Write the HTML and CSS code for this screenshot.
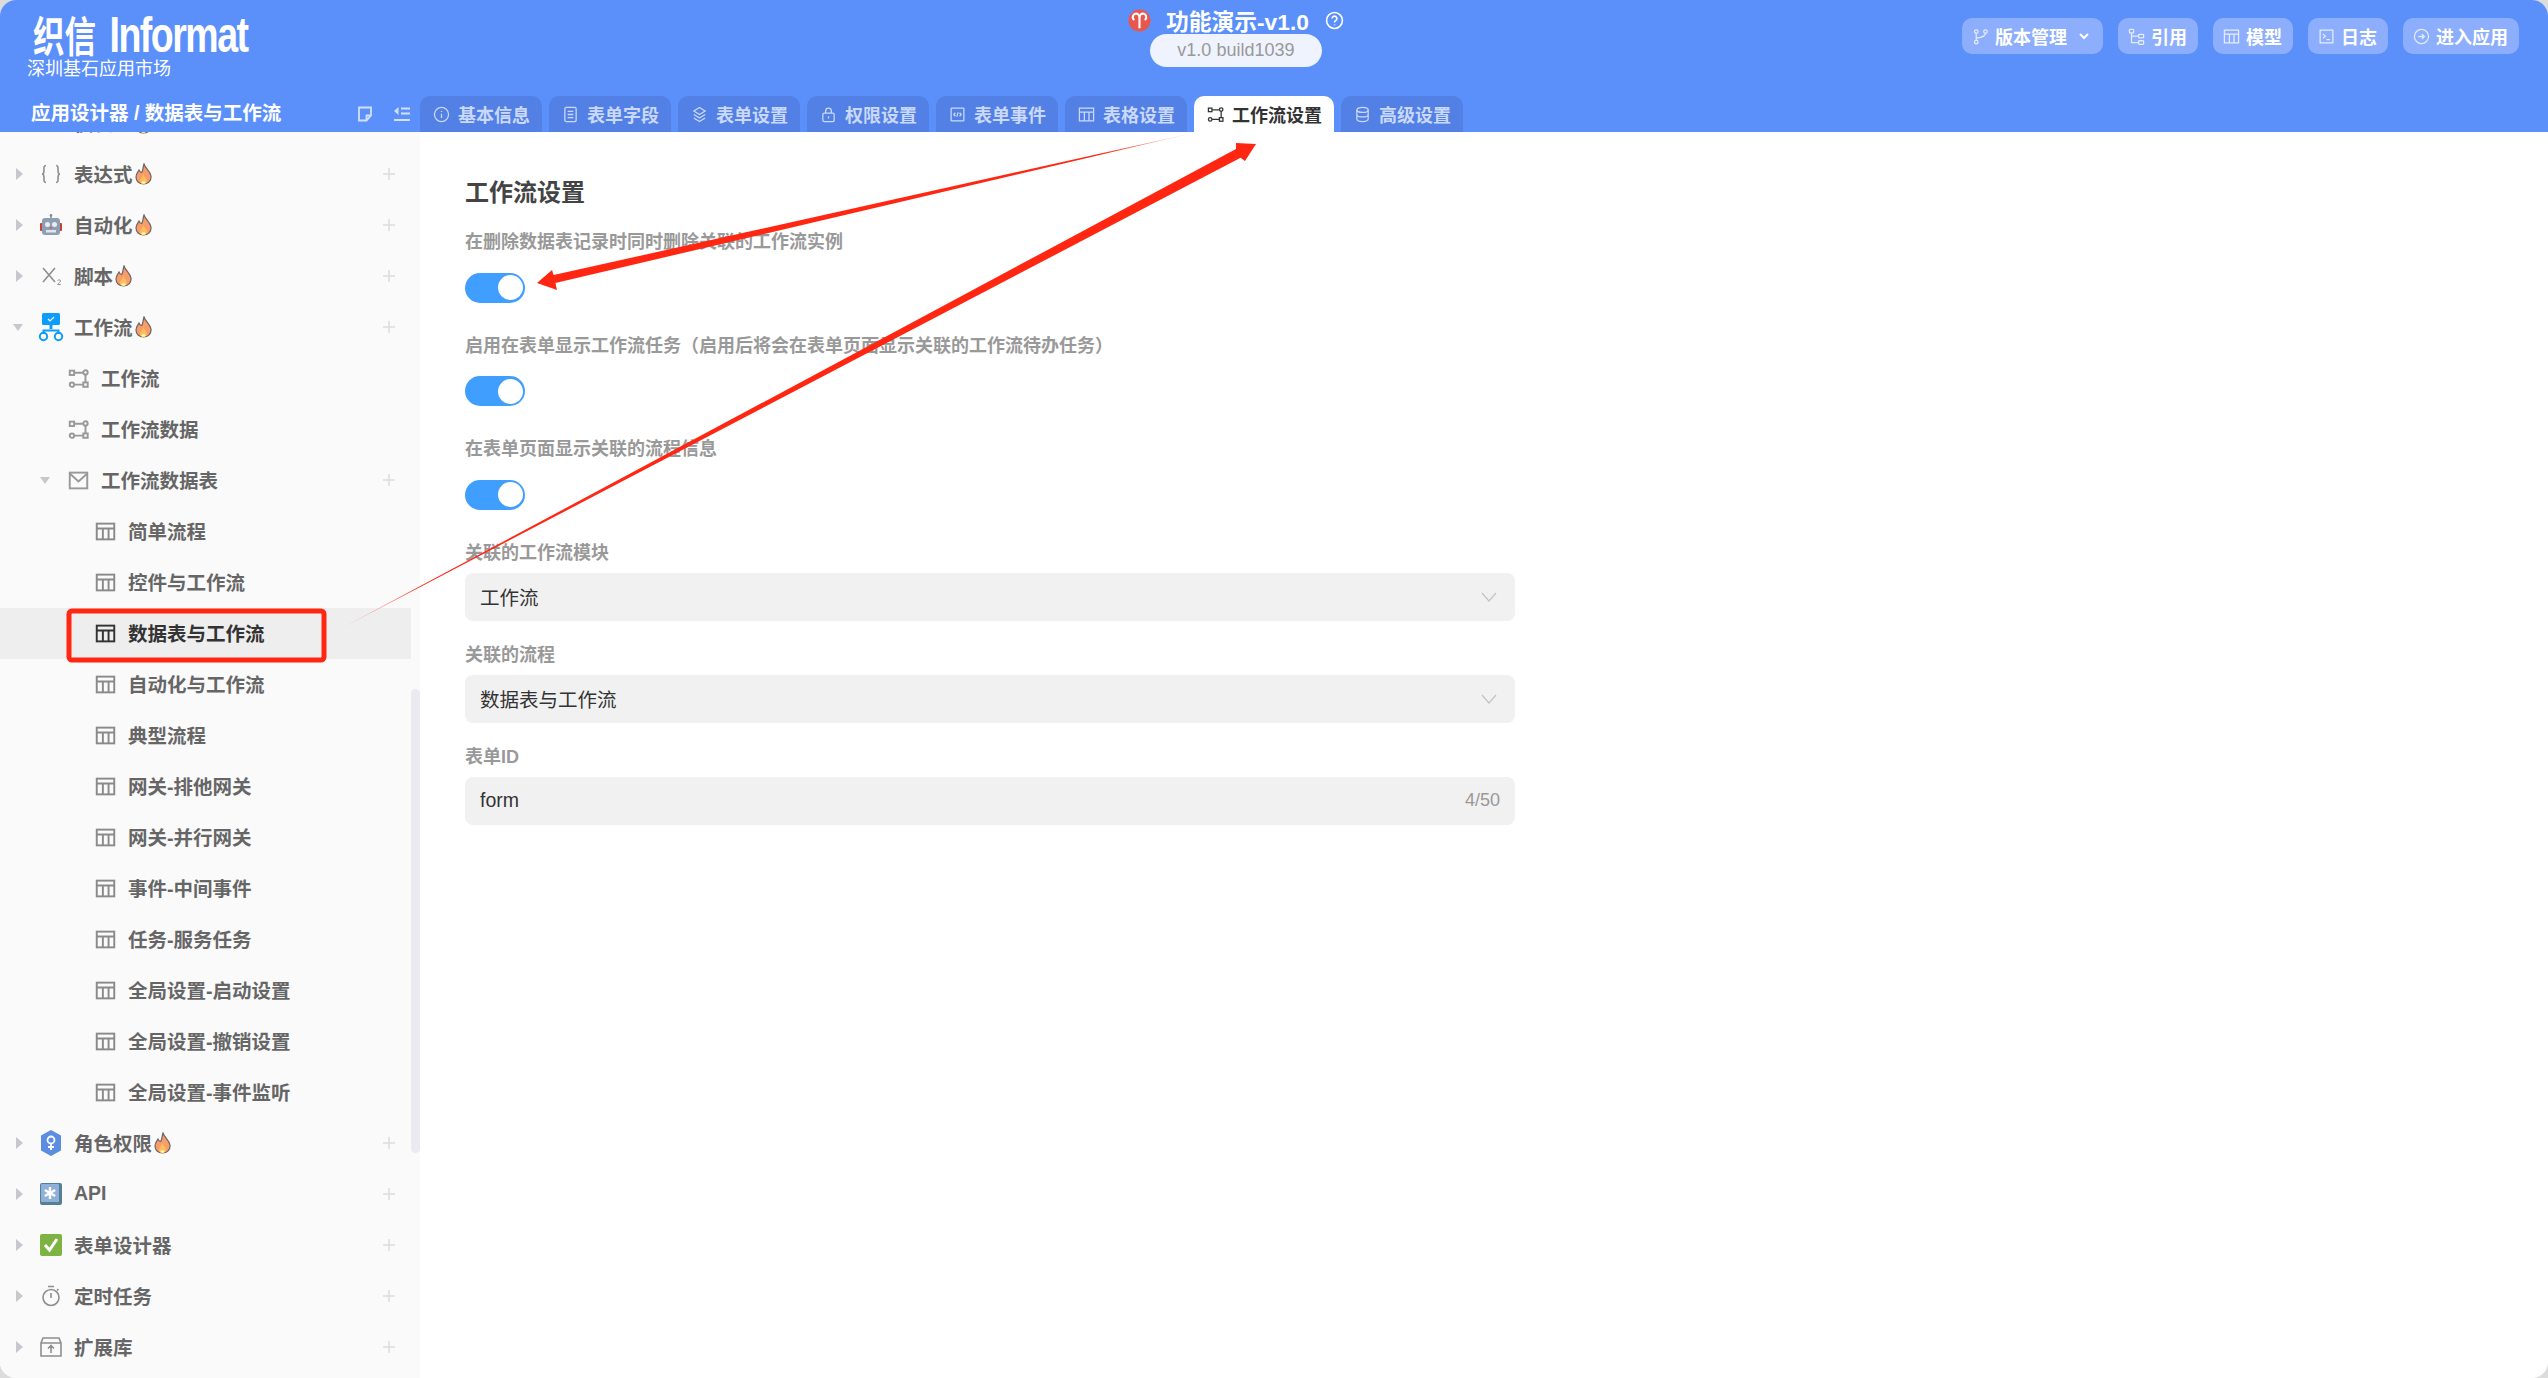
FILE: index.html
```html
<!DOCTYPE html>
<html lang="zh-CN">
<head>
  <meta charset="UTF-8">
  <meta name="viewport" content="width=device-width, initial-scale=1">
  <title>织信 Informat - 工作流设置</title>
  <link rel="stylesheet" href="styles.css">
</head>
<body>
  <!-- Icons -->
  <svg class="sprite" aria-hidden="true">
    <symbol id="i-info" viewBox="0 0 24 24"><circle cx="12" cy="12" r="10"/><path d="M12 11v6M12 7v1.5"/></symbol>
    <symbol id="i-doc" viewBox="0 0 24 24"><rect x="4" y="2" width="16" height="20" rx="2"/><path d="M8 7.5h8M8 12h8M8 16.5h8"/></symbol>
    <symbol id="i-layers" viewBox="0 0 24 24"><path d="M12 2l8 5-8 5-8-5zM4 12l8 5 8-5M4 17l8 5 8-5"/></symbol>
    <symbol id="i-lock" viewBox="0 0 24 24"><rect x="4" y="10" width="16" height="12" rx="2"/><path d="M8 10V7a4 4 0 0 1 8 0v3M12 14.5v3"/></symbol>
    <symbol id="i-code" viewBox="0 0 24 24"><rect x="3" y="3" width="18" height="18" rx="1"/><path d="M9 9.5L6.8 12 9 14.5M15 9.5l2.2 2.5-2.2 2.5M13 9l-2 6"/></symbol>
    <symbol id="i-table" viewBox="0 0 24 24"><rect x="2" y="3" width="20" height="18"/><path d="M2 8.5h20M9 8.5V21M15.500 8.500V21"/></symbol>
    <symbol id="i-flow" viewBox="0 0 24 24"><rect x="2" y="3" width="5" height="5"/><circle cx="20" cy="5" r="2.500"/><circle cx="4.500" cy="19" r="2.500"/><rect x="17.500" y="16.500" width="5" height="5"/><path d="M7 5.500h10.500M20 7.500v9M7 19h10.500"/></symbol>
    <symbol id="i-db" viewBox="0 0 24 24"><ellipse cx="12" cy="5.500" rx="8" ry="3.500"/><path d="M4 5.500v13c0 2 3.600 3.500 8 3.500s8-1.500 8-3.500v-13M4 12c0 2 3.600 3.500 8 3.500s8-1.500 8-3.500"/></symbol>
    <symbol id="i-mail" viewBox="0 0 24 24"><rect x="2" y="3" width="20" height="18"/><path d="M2 4l10 9 10-9"/></symbol>
    <symbol id="i-branch" viewBox="0 0 24 24"><circle cx="6" cy="5" r="2.500"/><circle cx="6" cy="20" r="2.500"/><circle cx="19" cy="5" r="2.500"/><path d="M6 7.500v10M19 7.500c0 5-6 5.500-13 7"/></symbol>
    <symbol id="i-tree" viewBox="0 0 24 24"><rect x="2" y="2" width="6" height="5" rx="1"/><rect x="15" y="9" width="7" height="5" rx="1"/><rect x="15" y="18" width="7" height="5" rx="1"/><path d="M5 7v13.500h10M5 11.500h10"/></symbol>
    <symbol id="i-term" viewBox="0 0 24 24"><rect x="3" y="3" width="18" height="18"/><path d="M7 8.500l3.500 3L7 14.500M12 16.500h5"/></symbol>
    <symbol id="i-enter" viewBox="0 0 24 24"><circle cx="12" cy="12" r="10"/><path d="M7.500 12h8.500M12.500 8.500L16 12l-3.500 3.500"/></symbol>
    <symbol id="i-plus" viewBox="0 0 12 12"><path d="M6 0v12M0 6h12"/></symbol>
    <symbol id="i-fire" viewBox="0 0 17 22">
      <path class="flame" d="M9 1c1 4 6 7 7 12 .5 5-3 8-7.500 8S1 18 1 14c0-3 2-5 3-7 1 2 2 3 3 2 1-2 1-5 2-8z"/>
      <path class="flame-in" d="M8.500 11c.5 3 3.500 4 3.500 7 0 2-2 3-3.500 3C6.500 21 5 20 5 18s2-3 3.500-7z"/>
      <ellipse class="flame-core" cx="8.500" cy="19.500" rx="2" ry="1.300"/>
    </symbol>
  </svg>

  <div class="app">
    <!-- Header -->
    <header class="header">
      <div class="header-top">
        <div class="brand">
          <div class="logo"><span class="logo-cn">织信</span><span class="logo-en">Informat</span></div>
          <div class="brand-sub">深圳基石应用市场</div>
        </div>
        <div class="app-info">
          <div class="app-title">
            <svg class="aries" viewBox="0 0 24 24"><circle cx="12" cy="12" r="11.500"/><path d="M12 20V10C12 5 9.500 4.500 7.500 5S3.500 9 6.500 11.500M12 10C12 5 14.500 4.500 16.500 5s4 4 1 6.500"/></svg>
            <span>功能演示-v1.0</span>
            <svg class="help" viewBox="0 0 24 24"><circle cx="12" cy="12" r="10"/><path d="M9 9.500a3 3 0 1 1 4.500 2.600c-1 .6-1.500 1.200-1.500 2.400M12 17v1"/></svg>
          </div>
          <div class="version">v1.0 build1039</div>
        </div>
        <div class="actions">
          <a class="action"><svg class="ico"><use href="#i-branch"/></svg>版本管理<svg class="action-caret" viewBox="0 0 10 7"><path d="M1 1l4 4 4-4"/></svg></a>
          <a class="action"><svg class="ico"><use href="#i-tree"/></svg>引用</a>
          <a class="action"><svg class="ico"><use href="#i-table"/></svg>模型</a>
          <a class="action"><svg class="ico"><use href="#i-term"/></svg>日志</a>
          <a class="action"><svg class="ico"><use href="#i-enter"/></svg>进入应用</a>
        </div>
      </div>
      <div class="header-bottom">
        <div class="crumb">
          <span class="crumb-text">应用设计器 / 数据表与工作流</span>
          <svg class="crumb-ico" viewBox="0 0 16 16"><path d="M2 1.500h12v8l-4.500 5H2zM14 9.500H9.500v5"/></svg>
          <svg class="crumb-ico" viewBox="0 0 16 16"><path d="M7 2.500h9M7 7.500h9M0 14h16"/><path class="solid" d="M4.500 1v8L0 5z"/></svg>
        </div>
        <nav class="tabs">
          <a class="tab"><svg class="ico"><use href="#i-info"/></svg>基本信息</a>
          <a class="tab"><svg class="ico"><use href="#i-doc"/></svg>表单字段</a>
          <a class="tab"><svg class="ico"><use href="#i-layers"/></svg>表单设置</a>
          <a class="tab"><svg class="ico"><use href="#i-lock"/></svg>权限设置</a>
          <a class="tab"><svg class="ico"><use href="#i-code"/></svg>表单事件</a>
          <a class="tab"><svg class="ico"><use href="#i-table"/></svg>表格设置</a>
          <a class="tab active"><svg class="ico"><use href="#i-flow"/></svg>工作流设置</a>
          <a class="tab"><svg class="ico"><use href="#i-db"/></svg>高级设置</a>
        </nav>
      </div>
    </header>

    <div class="body">
      <!-- Sidebar -->
      <aside class="sidebar">
        <div class="tree">
          <div class="row lv1"><i class="caret"></i>
            <svg class="emoji" viewBox="0 0 22 22"><rect x="1" y="3" width="20" height="16" fill="#c9d3e6"/><rect x="3" y="8" width="5" height="9" fill="#e58a8a"/></svg>
            <span class="label">仪表盘</span><svg class="fire"><use href="#i-fire"/></svg><svg class="plus"><use href="#i-plus"/></svg></div>
          <div class="row lv1"><i class="caret"></i>
            <svg class="emoji line" viewBox="0 0 22 22"><path d="M6 2.500C3.500 2.500 4 5 4 7.500S3.500 11 2 11c1.500 0 2 1 2 3.500s-.5 5 2 5M16 2.500c2.500 0 2 2.500 2 5s.5 3.500 2 3.500c-1.500 0-2 1-2 3.500s.5 5-2 5"/></svg>
            <span class="label">表达式</span><svg class="fire"><use href="#i-fire"/></svg><svg class="plus"><use href="#i-plus"/></svg></div>
          <div class="row lv1"><i class="caret"></i>
            <svg class="emoji" viewBox="0 0 22 22"><rect x="10.300" y="0" width="1.400" height="5" fill="#7d8b99"/><circle cx="11" cy="1.500" r="1.300" fill="#7d8b99"/><rect x="0" y="9" width="3" height="8" rx="1" fill="#c9403f"/><rect x="19" y="9" width="3" height="8" rx="1" fill="#c9403f"/><rect x="2" y="4" width="18" height="17" rx="3" fill="#8f9fb3"/><circle cx="7.500" cy="10.500" r="2.500" fill="#e8edf2"/><circle cx="14.500" cy="10.500" r="2.500" fill="#e8edf2"/><rect x="10" y="13" width="2" height="1.500" fill="#d9534f"/><rect x="6" y="16" width="10" height="2.500" fill="#dfe5ec"/></svg>
            <span class="label">自动化</span><svg class="fire"><use href="#i-fire"/></svg><svg class="plus"><use href="#i-plus"/></svg></div>
          <div class="row lv1"><i class="caret"></i>
            <svg class="emoji line" viewBox="0 0 22 22"><path d="M3 3l12 14M15 3L3 17"/><path class="thin" d="M17.500 15.500c1-1 3-.8 3 .5s-2 2-3 3.500h3.200"/></svg>
            <span class="label">脚本</span><svg class="fire"><use href="#i-fire"/></svg><svg class="plus"><use href="#i-plus"/></svg></div>
          <div class="row lv1"><i class="caret open"></i>
            <svg class="emoji emoji-flow" viewBox="0 0 26 28"><rect x="4" y="0" width="18" height="12" rx="1.500" fill="#0c9dfc"/><path d="M10 6l2 2 4-4" fill="none" stroke="#fff" stroke-width="1.200"/><rect x="11.500" y="12" width="3" height="4" fill="#0c9dfc"/><path d="M5.500 21v-3.500h15V21" fill="none" stroke="#0c9dfc" stroke-width="2"/><circle cx="5.500" cy="23.500" r="3.700" fill="none" stroke="#0c9dfc" stroke-width="2"/><circle cx="20.500" cy="23.500" r="3.700" fill="none" stroke="#0c9dfc" stroke-width="2"/></svg>
            <span class="label">工作流</span><svg class="fire"><use href="#i-fire"/></svg><svg class="plus"><use href="#i-plus"/></svg></div>
          <div class="row lv2"><i class="caret leaf"></i><svg class="ico"><use href="#i-flow"/></svg><span class="label">工作流</span></div>
          <div class="row lv2"><i class="caret leaf"></i><svg class="ico"><use href="#i-flow"/></svg><span class="label">工作流数据</span></div>
          <div class="row lv2"><i class="caret open"></i><svg class="ico"><use href="#i-mail"/></svg><span class="label">工作流数据表</span><svg class="plus"><use href="#i-plus"/></svg></div>
          <div class="row lv3"><svg class="ico"><use href="#i-table"/></svg><span class="label">简单流程</span></div>
          <div class="row lv3"><svg class="ico"><use href="#i-table"/></svg><span class="label">控件与工作流</span></div>
          <div class="row lv3 selected"><svg class="ico"><use href="#i-table"/></svg><span class="label">数据表与工作流</span></div>
          <div class="row lv3"><svg class="ico"><use href="#i-table"/></svg><span class="label">自动化与工作流</span></div>
          <div class="row lv3"><svg class="ico"><use href="#i-table"/></svg><span class="label">典型流程</span></div>
          <div class="row lv3"><svg class="ico"><use href="#i-table"/></svg><span class="label">网关-排他网关</span></div>
          <div class="row lv3"><svg class="ico"><use href="#i-table"/></svg><span class="label">网关-并行网关</span></div>
          <div class="row lv3"><svg class="ico"><use href="#i-table"/></svg><span class="label">事件-中间事件</span></div>
          <div class="row lv3"><svg class="ico"><use href="#i-table"/></svg><span class="label">任务-服务任务</span></div>
          <div class="row lv3"><svg class="ico"><use href="#i-table"/></svg><span class="label">全局设置-启动设置</span></div>
          <div class="row lv3"><svg class="ico"><use href="#i-table"/></svg><span class="label">全局设置-撤销设置</span></div>
          <div class="row lv3"><svg class="ico"><use href="#i-table"/></svg><span class="label">全局设置-事件监听</span></div>
          <div class="row lv1"><i class="caret"></i>
            <svg class="emoji emoji-hex" viewBox="0 0 22 26"><path d="M11 0l10 5.500v15L11 26 1 20.500v-15z" fill="#5b8de0"/><circle cx="11" cy="10" r="3.500" fill="none" stroke="#fff" stroke-width="1.800"/><path d="M11 13.500V20M8 17h6" stroke="#fff" stroke-width="1.800"/></svg>
            <span class="label">角色权限</span><svg class="fire"><use href="#i-fire"/></svg><svg class="plus"><use href="#i-plus"/></svg></div>
          <div class="row lv1"><i class="caret"></i>
            <svg class="emoji" viewBox="0 0 22 22"><rect width="22" height="22" rx="2" fill="#547f94"/><rect x="1" y="1" width="18" height="18" rx="1" fill="#8fb0d8"/><path d="M10 4v12M4.800 7l10.400 6M15.200 7L4.800 13" stroke="#fff" stroke-width="2.400"/></svg>
            <span class="label">API</span><svg class="plus"><use href="#i-plus"/></svg></div>
          <div class="row lv1"><i class="caret"></i>
            <svg class="emoji" viewBox="0 0 22 22"><rect width="22" height="22" rx="2" fill="#7cb342"/><path d="M5 11l4.500 5L17 5" fill="none" stroke="#fff" stroke-width="3"/></svg>
            <span class="label">表单设计器</span><svg class="plus"><use href="#i-plus"/></svg></div>
          <div class="row lv1"><i class="caret"></i>
            <svg class="emoji line" viewBox="0 0 22 22"><circle cx="11" cy="12.500" r="8"/><path d="M8 1.500h6M11 8v5M17 5.500l1.500-1.500"/></svg>
            <span class="label">定时任务</span><svg class="plus"><use href="#i-plus"/></svg></div>
          <div class="row lv1"><i class="caret"></i>
            <svg class="emoji line" viewBox="0 0 22 22"><path d="M3 2h16l2 5v13H1V7zM1 7h20M11 17v-7M8 12.500l3-3 3 3"/></svg>
            <span class="label">扩展库</span><svg class="plus"><use href="#i-plus"/></svg></div>
        </div>
        <div class="scrollbar"></div>
      </aside>

      <!-- Form -->
      <main class="main">
        <h1 class="main-title">工作流设置</h1>
        <div class="field-switch">
          <div class="field-label">在删除数据表记录时同时删除关联的工作流实例</div>
          <div class="switch"></div>
        </div>
        <div class="field-switch">
          <div class="field-label">启用在表单显示工作流任务（启用后将会在表单页面显示关联的工作流待办任务）</div>
          <div class="switch"></div>
        </div>
        <div class="field-switch">
          <div class="field-label">在表单页面显示关联的流程信息</div>
          <div class="switch"></div>
        </div>
        <div class="field">
          <div class="field-label">关联的工作流模块</div>
          <div class="input"><span>工作流</span><svg class="chevron" viewBox="0 0 16 10"><path d="M1 1l7 8 7-8"/></svg></div>
        </div>
        <div class="field">
          <div class="field-label">关联的流程</div>
          <div class="input"><span>数据表与工作流</span><svg class="chevron" viewBox="0 0 16 10"><path d="M1 1l7 8 7-8"/></svg></div>
        </div>
        <div class="field">
          <div class="field-label">表单ID</div>
          <div class="input input-text"><span>form</span><span class="count">4/50</span></div>
        </div>
      </main>
    </div>

    <!-- Annotations -->
    <svg class="marks" viewBox="0 0 2548 1378" aria-hidden="true">
      <defs>
        <linearGradient id="fade1" gradientUnits="userSpaceOnUse" x1="1193" y1="133" x2="1100" y2="154">
          <stop offset="0" stop-color="#ff2612" stop-opacity="0.15"/>
          <stop offset="1" stop-color="#ff2612"/>
        </linearGradient>
        <linearGradient id="fade2" gradientUnits="userSpaceOnUse" x1="340" y1="629" x2="420" y2="587">
          <stop offset="0" stop-color="#ff2612" stop-opacity="0.25"/>
          <stop offset="1" stop-color="#ff2612"/>
        </linearGradient>
      </defs>
      <rect class="mark-box" x="69" y="611" width="255" height="49" rx="3"/>
      <polygon fill="url(#fade1)" points="1193,133 553.600,275 552,270 537,283 557,290 555.400,283"/>
      <polygon fill="url(#fade2)" points="340,629 1236,149 1236,143 1256,144 1245,161 1240.600,157.800"/>
    </svg>
  </div>
</body>
</html>
```

FILE: styles.css
```css
* {
  margin: 0;
  padding: 0;
  box-sizing: border-box;
}

html, body {
  height: 100%;
  overflow: hidden;
  font-family: "Liberation Sans", "Noto Sans CJK SC", sans-serif;
  background: #dcdcdc;
}

.sprite {
  display: none;
}

.ico {
  flex: none;
  fill: none;
  stroke: currentColor;
  stroke-width: 2;
}

.app {
  position: relative;
  height: 100%;
  display: flex;
  flex-direction: column;
  background: #fff;
  border-radius: 16px;
  overflow: hidden;
}

/* === HEADER === */
.header {
  flex: none;
  height: 132px;
  background: #5b90fb;
  color: #fff;
}

.header-top {
  height: 96px;
  display: flex;
  align-items: flex-start;
}

.brand {
  width: 1128px;
  padding: 17px 0 0 27px;
}

.logo {
  height: 37px;
  line-height: 37px;
  margin-left: 6px;
  font-weight: 700;
  white-space: nowrap;
  transform: scaleX(0.75);
  transform-origin: left center;
}

.logo-cn {
  font-size: 42px;
  margin-right: 18px;
}

.logo-en {
  font-size: 50px;
  letter-spacing: -2px;
}

.brand-sub {
  margin-top: 5px;
  font-size: 18px;
  line-height: 20px;
}

.app-info {
  display: flex;
  flex-direction: column;
  align-items: center;
  padding-top: 9px;
}

.app-title {
  height: 22px;
  display: flex;
  align-items: center;
  font-size: 22.750px;
  font-weight: 700;
  white-space: nowrap;
}

.aries {
  width: 23px;
  height: 23px;
  margin-right: 15px;
}

.aries circle {
  fill: #e8574e;
}

.aries path {
  fill: none;
  stroke: #fff;
  stroke-width: 2.200;
}

.help {
  width: 19px;
  height: 19px;
  margin-left: 16px;
  fill: none;
  stroke: #fff;
  stroke-width: 2;
}

.version {
  margin-top: 3px;
  width: 172px;
  height: 33px;
  line-height: 33px;
  text-align: center;
  font-size: 18px;
  color: #999;
  background: #eef3fe;
  border-radius: 17px;
}

.actions {
  margin-left: auto;
  padding: 18px 29px 0 0;
  display: flex;
  gap: 15px;
}

.action {
  height: 36px;
  padding: 0 11px 0 10px;
  display: flex;
  align-items: center;
  gap: 6px;
  font-size: 18px;
  font-weight: 700;
  background: #8daefc;
  border-radius: 10px;
}

.action .ico {
  width: 17px;
  height: 17px;
  color: #e3ebff;
  stroke-width: 1.800;
}

.action-caret {
  width: 10px;
  height: 7px;
  margin: 0 3px 0 6px;
  fill: none;
  stroke: #fff;
  stroke-width: 2;
}

.header-bottom {
  height: 36px;
  display: flex;
}

.crumb {
  width: 420px;
  padding: 0 10px 0 31px;
  display: flex;
  align-items: center;
  gap: 21px;
}

.crumb-text {
  margin-right: auto;
  padding-bottom: 5px;
  font-size: 19.500px;
  font-weight: 700;
  white-space: nowrap;
}

.crumb-ico {
  width: 16px;
  height: 16px;
  flex: none;
  fill: none;
  stroke: #d3e0fd;
  stroke-width: 1.800;
}

.crumb-ico .solid {
  fill: #d3e0fd;
  stroke: none;
}

.tabs {
  display: flex;
  gap: 7px;
}

.tab {
  height: 36px;
  padding: 0 12px 0 13px;
  display: flex;
  align-items: center;
  gap: 8px;
  font-size: 18px;
  font-weight: 700;
  color: #cad9fb;
  background: #5280e4;
  border-radius: 10px 10px 0 0;
}

.tab .ico {
  width: 17px;
  height: 17px;
  stroke-width: 1.800;
}

.tab.active {
  color: #333;
  background: #fff;
}

/* === BODY === */
.body {
  flex: 1;
  display: flex;
  min-height: 0;
}

.sidebar {
  position: relative;
  flex: none;
  width: 420px;
  background: #fafafa;
  overflow: hidden;
}

.tree {
  width: 411px;
  margin-top: -34.500px;
}

.scrollbar {
  position: absolute;
  top: 557px;
  right: 0;
  width: 9px;
  height: 464px;
  background: #e9ebf0;
  border-radius: 5px;
}

.row {
  height: 51px;
  display: flex;
  align-items: center;
  font-size: 19.500px;
  font-weight: 700;
  color: #666;
  white-space: nowrap;
}

.label {
  padding-bottom: 2px;
}

.lv1 {
  padding-left: 16px;
}

.lv2 {
  padding-left: 40px;
}

.lv3 {
  padding-left: 95px;
}

.caret {
  flex: none;
  width: 24px;
  height: 0;
  position: relative;
}

.caret::before {
  content: "";
  position: absolute;
  top: -6px;
  left: 0;
  border-style: solid;
  border-width: 6px 0 6px 7px;
  border-color: transparent transparent transparent #c6c8cd;
}

.caret.open::before {
  top: -3px;
  left: -3px;
  border-width: 7px 5px 0 5px;
  border-color: #c6c8cd transparent transparent transparent;
}

.lv2 .caret {
  width: 28px;
}

.lv2 .caret.open::before {
  left: 0;
}

.caret.leaf::before {
  display: none;
}

.emoji {
  flex: none;
  width: 22px;
  height: 22px;
  margin-right: 12px;
  overflow: visible;
}

.emoji-flow {
  width: 26px;
  height: 28px;
  margin: 0 10px 0 -2px;
}

.emoji-hex {
  height: 26px;
}

.emoji.line {
  fill: none;
  stroke: #8f8f8f;
  stroke-width: 1.600;
}

.emoji .thin {
  stroke-width: 1;
}

.row .ico {
  width: 21px;
  height: 21px;
  margin-right: 12px;
  color: #999;
  stroke-width: 2.200;
}

.lv3 .ico {
  color: #8a8a8a;
}

.fire {
  flex: none;
  width: 17px;
  height: 22px;
  margin-left: 2px;
}

.flame {
  fill: #f79c6b;
  stroke: #6f655f;
  stroke-width: 1.200;
}

.flame-in {
  fill: #fbc05a;
}

.flame-core {
  fill: #fff3b0;
}

.plus {
  flex: none;
  width: 12px;
  height: 12px;
  margin-left: auto;
  margin-right: 16px;
  fill: none;
  stroke: #ddd;
  stroke-width: 1.500;
}

.row.selected {
  background: #eee;
  color: #333;
}

.row.selected .ico {
  color: #333;
}

/* === FORM === */
.main {
  flex: 1;
  padding: 45px 0 0 45px;
}

.main-title {
  height: 32px;
  line-height: 32px;
  margin-bottom: 21px;
  font-size: 24px;
  font-weight: 700;
  color: #444;
}

.field-label {
  height: 24px;
  line-height: 24px;
  font-size: 18px;
  font-weight: 700;
  color: #999;
  white-space: nowrap;
}

.field-switch {
  margin-bottom: 31px;
}

.switch {
  position: relative;
  width: 60px;
  height: 30px;
  margin-top: 18.500px;
  background: #409eff;
  border-radius: 15px;
}

.switch::after {
  content: "";
  position: absolute;
  top: 2.500px;
  right: 2px;
  width: 25px;
  height: 25px;
  background: #fff;
  border-radius: 50%;
}

.field {
  width: 1050px;
  margin-bottom: 22px;
}

.input {
  height: 48px;
  margin-top: 8px;
  padding: 0 18px 0 15px;
  display: flex;
  align-items: center;
  justify-content: space-between;
  font-size: 19.500px;
  color: #333;
  background: #f1f1f1;
  border-radius: 8px;
}

.input-text {
  padding-right: 15px;
}

.chevron {
  width: 16px;
  height: 10px;
  fill: none;
  stroke: #c0c4cc;
  stroke-width: 1.200;
}

.count {
  font-size: 18px;
  color: #999;
}

/* === ANNOTATIONS === */
.marks {
  position: absolute;
  top: 0;
  left: 0;
  width: 2548px;
  height: 1378px;
  pointer-events: none;
}

.mark-box {
  fill: none;
  stroke: #ff2612;
  stroke-width: 5;
}
```
